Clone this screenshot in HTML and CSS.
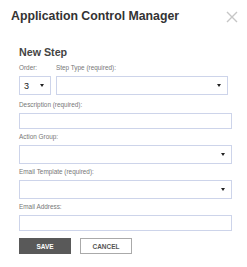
FILE: index.html
```html
<!DOCTYPE html>
<html lang="en">
<head>
  <meta charset="UTF-8" />
  <title>Application Control Manager</title>
  <link rel="stylesheet" href="styles.css">
</head>
<body>
  <div class="dialog">
    <!-- Header -->
    <div class="dialog__header">
      <h1>Application Control Manager</h1>
      <svg class="close-btn" width="12" height="12" viewBox="0 0 12 12">
        <path d="M1 1L11 11M11 1L1 11" stroke="#c6c6c6" stroke-width="1.4" fill="none"/>
      </svg>
    </div>

    <!-- Step form -->
    <div class="step-form">
      <h2>New Step</h2>

      <div class="row">
        <div class="field field--order">
          <label>Order:</label>
          <div class="select">
            <span class="select__value">3</span>
            <svg class="caret" width="4" height="3" viewBox="0 0 4 3"><path d="M0 0h4L2 3z" fill="#222"/></svg>
          </div>
        </div>
        <div class="field field--grow">
          <label>Step Type (required):</label>
          <div class="select">
            <span class="select__value"></span>
            <svg class="caret" width="4" height="3" viewBox="0 0 4 3"><path d="M0 0h4L2 3z" fill="#222"/></svg>
          </div>
        </div>
      </div>

      <div class="field">
        <label>Description (required):</label>
        <div class="input"></div>
      </div>

      <div class="field">
        <label>Action Group:</label>
        <div class="select">
          <span class="select__value"></span>
          <svg class="caret" width="4" height="3" viewBox="0 0 4 3"><path d="M0 0h4L2 3z" fill="#222"/></svg>
        </div>
      </div>

      <div class="field">
        <label>Email Template (required):</label>
        <div class="select">
          <span class="select__value"></span>
          <svg class="caret" width="4" height="3" viewBox="0 0 4 3"><path d="M0 0h4L2 3z" fill="#222"/></svg>
        </div>
      </div>

      <div class="field">
        <label>Email Address:</label>
        <div class="input"></div>
      </div>

      <div class="actions">
        <button class="btn btn--save">SAVE</button>
        <button class="btn btn--cancel">CANCEL</button>
      </div>
    </div>
  </div>
</body>
</html>
```

FILE: styles.css
```css
:root {
  --text-color: #333;
  --label-color: #777;
  --field-border: #cdd4ea;
  --btn-dark: #595959;
}

body {
  margin: 0;
  font-family: 'Liberation Sans', Arial, sans-serif;
  background: #fff;
  color: var(--text-color);
}

.dialog {
  padding: 9px 9px 0 11px;
}

.dialog__header {
  display: flex;
  justify-content: space-between;
  align-items: flex-start;
}

.dialog__header h1 {
  margin: 0;
  font-size: 12.3px;
  line-height: 15px;
  font-weight: bold;
  color: #333;
}

.close-btn {
  display: block;
  margin-top: 2px;
}

.step-form {
  padding: 22px 6px 0 8px;
}

.step-form h2 {
  margin: 0 0 5px 0;
  font-size: 10.7px;
  line-height: 13px;
  font-weight: bold;
  color: #444;
}

.row {
  display: flex;
  gap: 5px;
  margin-right: 4px;
  margin-bottom: 2px;
}

.field {
  display: flex;
  flex-direction: column;
  margin-bottom: 4px;
}

.field--order {
  width: 32px;
}

.field--grow {
  flex: 1;
}

.field label {
  font-size: 6.4px;
  line-height: 8px;
  color: var(--label-color);
  margin-bottom: 4px;
}

.input,
.select {
  box-sizing: border-box;
  border: 1px solid var(--field-border);
  background: #fff;
}

.input {
  height: 16px;
}

.select {
  height: 19px;
  display: flex;
  align-items: center;
  justify-content: space-between;
  padding: 0 6px 0 4px;
}

.select__value {
  font-size: 9px;
  color: #222;
}

.caret {
  display: block;
}

.actions {
  display: flex;
  gap: 9px;
  margin-top: 7px;
}

.btn {
  box-sizing: border-box;
  width: 52px;
  height: 16px;
  padding: 0;
  font-family: inherit;
  font-size: 6.5px;
  font-weight: bold;
  cursor: pointer;
}

.btn--save {
  background: var(--btn-dark);
  color: #fff;
  border: 1px solid var(--btn-dark);
}

.btn--cancel {
  background: #fff;
  color: #555;
  border: 1px solid #aaa;
}
```
